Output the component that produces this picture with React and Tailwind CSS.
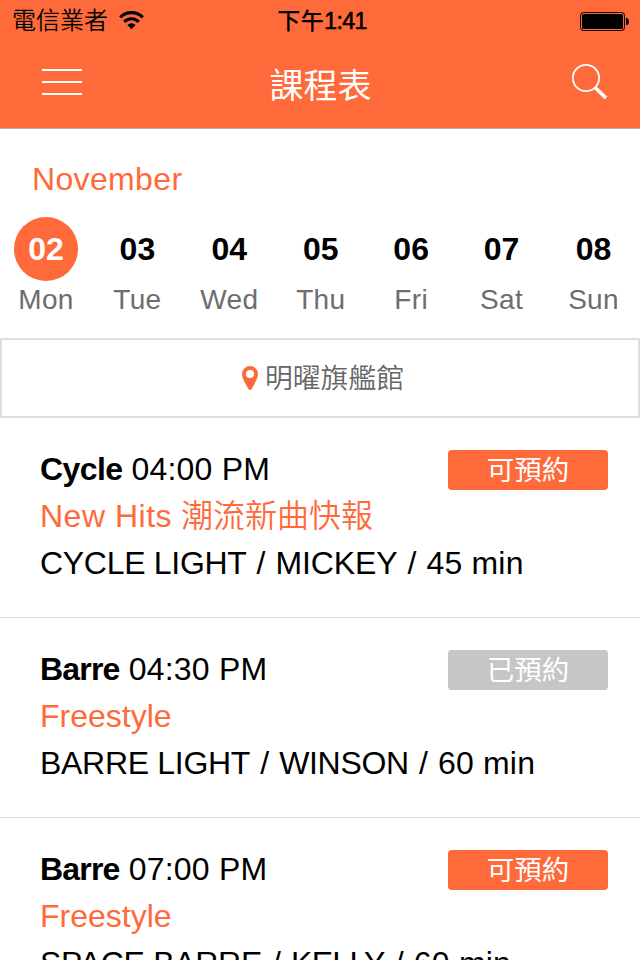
import React from "react";

const days = [
  ["02", "Mon", "w-[91px]"],
  ["03", "Tue", "w-[92px]"],
  ["04", "Wed", "w-[92px]"],
  ["05", "Thu", "w-[91px]"],
  ["06", "Fri", "w-[90px]"],
  ["07", "Sat", "w-[91px]"],
  ["08", "Sun", "w-[93px]"],
];

const classes = [
  { name: "Cycle", time: "04:00 PM", title: "New Hits", subtitle: "潮流新曲快報", room: "CYCLE LIGHT", coach: "MICKEY", length: "45 min", status: "可預約", open: true },
  { name: "Barre", time: "04:30 PM", title: "Freestyle", room: "BARRE LIGHT", coach: "WINSON", length: "60 min", status: "已預約", open: false },
  { name: "Barre", time: "07:00 PM", title: "Freestyle", room: "SPACE BARRE", coach: "KELLY", length: "60 min", status: "可預約", open: true },
];

const coachTracking = {
  MICKEY: "tracking-[-0.15px]",
  WINSON: "tracking-[-0.3px]",
  KELLY: "tracking-[-0.7px]",
};

const Slash = () => <span className="mx-[1.2px] whitespace-pre"> / </span>;

export default function App() {
  return (
    <div className="flex h-[960px] w-[640px] flex-col overflow-hidden bg-white font-['Liberation_Sans','Noto_Sans_CJK_TC',sans-serif] text-black">
      <header className="h-[129px] shrink-0 border-b border-[#b2b2b2] bg-[#ff6a3a]">
        <div className="grid h-10 grid-cols-3 items-center pr-[11px] pl-3 leading-10">
          <div className="flex items-center gap-[11px] whitespace-nowrap">
            <span className="text-[24px] font-[350]">電信業者</span>
            <svg width="25" height="19" viewBox="0 0 25 19" fill="none" stroke="#000" strokeWidth="3.2">
              <path d="M1.2 6.3a16 16 0 0 1 22.6 0M5.2 10.8a10.3 10.3 0 0 1 14.6 0" />
              <path d="M8.4 14a5.8 5.8 0 0 1 8.2 0L12.5 18.3z" fill="#000" stroke="none" />
            </svg>
          </div>
          <div className="pt-px pl-[3px] text-center text-[23px] font-medium tracking-[-0.6px] whitespace-nowrap">
            <span className="tracking-[0.5px]">下午</span>
            <span className="[-webkit-text-stroke:0.6px_#000]">1:41</span>
          </div>
          <svg className="mt-px justify-self-end" width="49" height="19" viewBox="0 0 49 19">
            <rect x="0.5" y="0.5" width="44" height="18" rx="3" fill="none" stroke="#000" />
            <rect x="2" y="2" width="41" height="15" rx="1.5" />
            <path d="M46 6h1c2.5 1 2.5 6 0 7h-1z" />
          </svg>
        </div>
        <div className="grid h-[84px] grid-cols-3 items-center pr-8 pl-[42px]">
          <div className="flex w-10 flex-col gap-[10px]">
            <i className="h-[2px] bg-white" />
            <i className="h-[2px] bg-white" />
            <i className="h-[2px] bg-white" />
          </div>
          <h1 className="pt-[7px] pr-[9px] text-center text-[34px] leading-10 text-white">課程表</h1>
          <svg className="justify-self-end" width="36" height="36" viewBox="0 0 36 36" fill="none" stroke="#fff">
            <circle cx="14" cy="14" r="13.1" strokeWidth="1.8" />
            <path d="M23 23.5L34 34" strokeWidth="3.8" />
          </svg>
        </div>
      </header>
      <section className="h-[209px] shrink-0 pt-[30px]">
        <h2 className="pl-8 text-[32px] leading-10 tracking-[0.35px] text-[#ff6a3a]">November</h2>
        <div className="mt-[18px] flex pl-[0.5px]">
          {days.map(([n, d, w], i) => (
            <div key={n} className={`${w} flex flex-col items-center`}>
              <div className={`flex size-16 items-center justify-center rounded-full text-[32px] font-bold ${i === 0 ? "bg-[#ff6a3a] text-white" : ""}`}>{n}</div>
              <div className="pt-px text-[28px] leading-9 tracking-[0.3px] text-[#6d6d6d]">{d}</div>
            </div>
          ))}
        </div>
      </section>
      <div className="flex h-20 shrink-0 items-center justify-center gap-[7px] border-2 border-[#dfdfdf] pl-[6px] text-[27.8px] leading-10 font-[350] text-[#666]">
        <svg width="16" height="24" viewBox="0 0 16 24">
          <path fill="#ff6a3a" fillRule="evenodd" d="M8 0a8 8 0 0 1 8 8c0 4.500-3.500 9.500-6.300 14.800q-1.700 2.400-3.400 0C3.500 17.500 0 12.500 0 8a8 8 0 0 1 8-8zm0 4a4 4 0 1 0 0 8 4 4 0 0 0 0-8z" />
        </svg>
        <span className="pt-[2px]">明曜旗艦館</span>
      </div>
      {classes.map((c, i) => (
        <article key={i} className="flex h-[200px] shrink-0 justify-between border-b border-[#dfdfdf] pt-7 pr-8 pl-10 text-[32px] leading-[47px] whitespace-nowrap">
          <div className="w-[408px]">
            <div className="h-[47px] tracking-[0.2px]">
              <b className={c.name === "Cycle" ? "tracking-[-0.6px]" : "tracking-[-0.8px]"}>{c.name}</b> {c.time}
            </div>
            <div className="h-[47px] font-[350] text-[#ff6a3a]">
              <span className={c.subtitle ? "tracking-[0.5px]" : ""}>{c.title}</span>
              {c.subtitle && <span> {c.subtitle}</span>}
            </div>
            <div className="h-[47px]">
              <span className="tracking-[-0.3px]">{c.room}</span>
              <Slash />
              <span className={coachTracking[c.coach]}>{c.coach}</span>
              <Slash />
              <span className="tracking-[0.2px]">{c.length}</span>
            </div>
          </div>
          <div className={`mt-1 flex h-10 w-40 items-center justify-center rounded-[4px] pt-px text-[27.5px] text-white ${c.open ? "bg-[#ff6a3a]" : "bg-[#c6c6c6]"}`}>{c.status}</div>
        </article>
      ))}
    </div>
  );
}
